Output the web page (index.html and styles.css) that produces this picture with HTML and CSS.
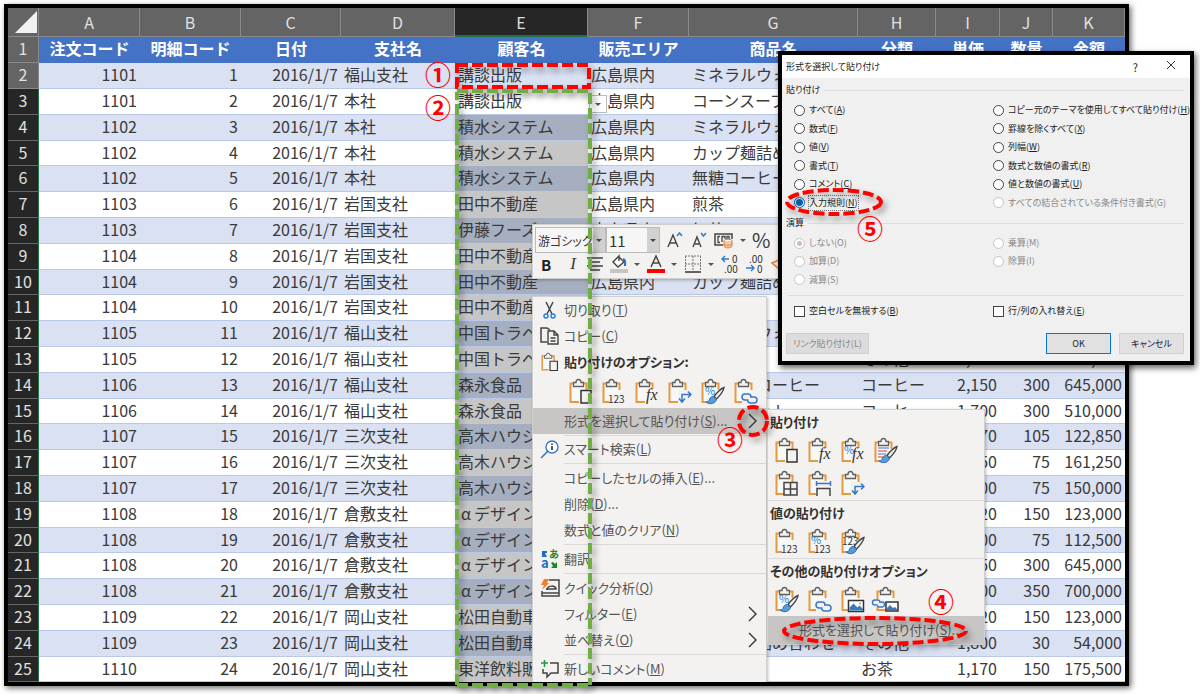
FILE: index.html
```html
<!DOCTYPE html>
<html lang="ja">
<head>
<meta charset="utf-8">
<title>形式を選択して貼り付け</title>
<link rel="stylesheet" href="styles.css">
</head>
<body>
<svg class="defs" aria-hidden="true">
  <symbol id="clip" viewBox="0 0 24 27">
    <path d="M2 6h15v18H2z" fill="#f5faf8"/>
    <path d="M5 5.500H1.500V24H10M14 5.500h3.500V12" fill="none" stroke="#e8983f" stroke-width="2"/>
    <path d="M4.500 8.500V4.500H7a2.500 3 0 0 1 5 0h2.500v4z" fill="#f3f2f1" stroke="#606060" stroke-width="1.300"/>
  </symbol>
  <symbol id="page" viewBox="0 0 24 27"><path d="M12 12.500h10v12.500H12z" fill="#f3f2f1" stroke="#333" stroke-width="1.500"/></symbol>
  <symbol id="brush" viewBox="0 0 24 27">
    <path d="M23 9.500c-3 1-8 6-10 9l2.500 2.500C18 18.500 22.500 13 23 9.500z" fill="#f3f2f1" stroke="#444" stroke-width="1.400"/>
    <path d="M12.500 18.500c-3 0-4 2-4.500 4-1 1.500-2.500 1.500-3 1.500 4 3.500 10.500 1 10.500-3z" fill="#5b9bd5" stroke="#2b6cb5"/>
  </symbol>
  <symbol id="swap" viewBox="0 0 24 27"><path d="M10 12h8v14h-8z" fill="#f3f2f1"/><path d="M14 24V16.500h9M20 13.500l3 3-3 3M11 20.500l3 3.500 3-3.500" fill="none" stroke="#3a78c3" stroke-width="1.500"/></symbol>
  <symbol id="link" viewBox="0 0 24 27"><path d="M8 14h15v12H8z" fill="#f3f2f1"/><path d="M14.500 22H11a3 3 0 0 1 0-6h3a3 3 0 0 1 3 3M16 19h4a3 3 0 0 1 0 6h-3.500a3 3 0 0 1-3-3" fill="none" stroke="#3a78c3" stroke-width="1.500"/></symbol>
  <symbol id="photo" viewBox="0 0 24 27"><path d="M7.500 14.500h15v11h-15z" fill="#fff" stroke="#333" stroke-width="1.500"/><path d="M8.500 24.500v-3l4-4 4 4 2-2 3.500 3.500v1.500z" fill="#3a78c3"/><circle cx="19" cy="17.500" r="1" fill="#e08b3a"/></symbol>
  <symbol id="paste-page" viewBox="0 0 24 27"><use href="#clip"/><use href="#page"/></symbol>
  <symbol id="paste-123" viewBox="0 0 24 27"><use href="#clip"/><path d="M7 16h17v10H7z" fill="#f3f2f1"/><text class="digits" x="6" y="25">123</text></symbol>
  <symbol id="paste-fx" viewBox="0 0 24 27"><use href="#clip"/><path d="M11 11h12v14H11z" fill="#f3f2f1"/><text class="fx" x="11" y="22">fx</text></symbol>
  <symbol id="paste-swap" viewBox="0 0 24 27"><use href="#clip"/><use href="#swap"/></symbol>
  <symbol id="paste-format" viewBox="0 0 24 27"><use href="#clip"/><text class="pct" x="4" y="17">%</text><use href="#brush"/></symbol>
  <symbol id="paste-link" viewBox="0 0 24 27"><use href="#clip"/><use href="#link"/></symbol>
</svg>

<main class="stage">
  <section class="sheet">
    <table class="grid">
      <colgroup><col class="w-head"><col class="w-a"><col class="w-b"><col class="w-c"><col class="w-d"><col class="w-e"><col class="w-f"><col class="w-g"><col class="w-h"><col class="w-i"><col class="w-j"><col class="w-k"></colgroup>
      <thead>
        <tr class="letters"><th><svg class="corner" viewBox="0 0 22 22"><path d="M22 0v22H0z"/></svg></th><th>A</th><th>B</th><th>C</th><th>D</th><th class="on">E</th><th>F</th><th>G</th><th>H</th><th>I</th><th>J</th><th>K</th></tr>
      </thead>
      <tbody>
        <tr class="titles"><th>1</th><td>注文コード</td><td>明細コード</td><td>日付</td><td>支社名</td><td>顧客名</td><td>販売エリア</td><td>商品名</td><td>分類</td><td>単価</td><td>数量</td><td>金額</td></tr>
        <tr><th>2</th><td>1101</td><td>1</td><td>2016/1/7</td><td>福山支社</td><td>講談出版</td><td>広島県内</td><td>ミネラルウォーター</td><td></td><td></td><td></td><td></td></tr>
        <tr><th>3</th><td>1101</td><td>2</td><td>2016/1/7</td><td>本社</td><td>講談出版</td><td>広島県内</td><td>コーンスープ</td><td></td><td></td><td></td><td></td></tr>
        <tr><th>4</th><td>1102</td><td>3</td><td>2016/1/7</td><td>本社</td><td>積水システム</td><td>広島県内</td><td>ミネラルウォーター</td><td></td><td></td><td></td><td></td></tr>
        <tr><th>5</th><td>1102</td><td>4</td><td>2016/1/7</td><td>本社</td><td>積水システム</td><td>広島県内</td><td>カップ麺詰め合わせ</td><td></td><td></td><td></td><td></td></tr>
        <tr><th>6</th><td>1102</td><td>5</td><td>2016/1/7</td><td>本社</td><td>積水システム</td><td>広島県内</td><td>無糖コーヒー</td><td></td><td></td><td></td><td></td></tr>
        <tr><th>7</th><td>1103</td><td>6</td><td>2016/1/7</td><td>岩国支社</td><td>田中不動産</td><td>広島県内</td><td>煎茶</td><td></td><td></td><td></td><td></td></tr>
        <tr><th>8</th><td>1103</td><td>7</td><td>2016/1/7</td><td>岩国支社</td><td>伊藤フーズ</td><td>広島県内</td><td>紅茶</td><td></td><td></td><td></td><td></td></tr>
        <tr><th>9</th><td>1104</td><td>8</td><td>2016/1/7</td><td>岩国支社</td><td>田中不動産</td><td></td><td></td><td></td><td></td><td></td><td></td></tr>
        <tr><th>10</th><td>1104</td><td>9</td><td>2016/1/7</td><td>岩国支社</td><td>田中不動産</td><td>広島県内</td><td>カップ麺詰め合わせ</td><td></td><td></td><td></td><td></td></tr>
        <tr><th>11</th><td>1104</td><td>10</td><td>2016/1/7</td><td>岩国支社</td><td>田中不動産</td><td></td><td></td><td></td><td></td><td></td><td></td></tr>
        <tr><th>12</th><td>1105</td><td>11</td><td>2016/1/7</td><td>福山支社</td><td>中国トラベル</td><td></td><td>ミネラルウォーター</td><td></td><td></td><td></td><td></td></tr>
        <tr><th>13</th><td>1105</td><td>12</td><td>2016/1/7</td><td>福山支社</td><td>中国トラベル</td><td></td><td></td><td>その他</td><td>2,000</td><td>35</td><td>70,000</td></tr>
        <tr><th>14</th><td>1106</td><td>13</td><td>2016/1/7</td><td>福山支社</td><td>森永食品</td><td></td><td>ブレンドコーヒー</td><td>コーヒー</td><td>2,150</td><td>300</td><td>645,000</td></tr>
        <tr><th>15</th><td>1106</td><td>14</td><td>2016/1/7</td><td>福山支社</td><td>森永食品</td><td></td><td>ギフトセット</td><td>コーヒー</td><td>1,700</td><td>300</td><td>510,000</td></tr>
        <tr><th>16</th><td>1107</td><td>15</td><td>2016/1/7</td><td>三次支社</td><td>高木ハウジング</td><td></td><td></td><td></td><td>1,170</td><td>105</td><td>122,850</td></tr>
        <tr><th>17</th><td>1107</td><td>16</td><td>2016/1/7</td><td>三次支社</td><td>高木ハウジング</td><td></td><td></td><td></td><td>2,150</td><td>75</td><td>161,250</td></tr>
        <tr><th>18</th><td>1107</td><td>17</td><td>2016/1/7</td><td>三次支社</td><td>高木ハウジング</td><td></td><td></td><td></td><td>2,000</td><td>75</td><td>150,000</td></tr>
        <tr><th>19</th><td>1108</td><td>18</td><td>2016/1/7</td><td>倉敷支社</td><td><span class="full">α</span>デザイン</td><td></td><td></td><td></td><td>820</td><td>150</td><td>123,000</td></tr>
        <tr><th>20</th><td>1108</td><td>19</td><td>2016/1/7</td><td>倉敷支社</td><td><span class="full">α</span>デザイン</td><td></td><td></td><td></td><td>1,500</td><td>75</td><td>112,500</td></tr>
        <tr><th>21</th><td>1108</td><td>20</td><td>2016/1/7</td><td>倉敷支社</td><td><span class="full">α</span>デザイン</td><td></td><td></td><td></td><td>2,150</td><td>300</td><td>645,000</td></tr>
        <tr><th>22</th><td>1108</td><td>21</td><td>2016/1/7</td><td>倉敷支社</td><td><span class="full">α</span>デザイン</td><td></td><td></td><td></td><td>2,000</td><td>350</td><td>700,000</td></tr>
        <tr><th>23</th><td>1109</td><td>22</td><td>2016/1/7</td><td>岡山支社</td><td>松田自動車</td><td></td><td></td><td></td><td>820</td><td>150</td><td>123,000</td></tr>
        <tr><th>24</th><td>1109</td><td>23</td><td>2016/1/7</td><td>岡山支社</td><td>松田自動車</td><td></td><td>カップ麺詰め合わせ</td><td>その他</td><td>1,800</td><td>30</td><td>54,000</td></tr>
        <tr><th>25</th><td>1110</td><td>24</td><td>2016/1/7</td><td>岡山支社</td><td>東洋飲料販売</td><td></td><td></td><td>お茶</td><td>1,170</td><td>150</td><td>175,500</td></tr>
      </tbody>
    </table>
  </section>

  <button class="cell-drop" type="button" aria-label="リスト"><i class="tri"></i></button>

  <div class="mini" role="toolbar">
    <div class="mini-row">
      <span class="pick pick-font"><select aria-label="フォント"><option>游ゴシック</option></select><i class="tri"></i></span>
      <span class="pick pick-size"><select aria-label="サイズ"><option>11</option></select><i class="tri"></i></span>
      <button type="button" aria-label="フォントを拡大"><svg width="18" height="20" viewBox="0 0 18 20"><path d="M2 17L7 5l5 12M4 13h6" fill="none" stroke="#444" stroke-width="1.400"/><path d="M11 6l2.500-3L16 6" fill="none" stroke="#2b7cd3" stroke-width="1.500"/></svg></button>
      <button type="button" aria-label="フォントを縮小"><svg width="18" height="20" viewBox="0 0 18 20"><path d="M3 17L7 7l4 10M5 14h4" fill="none" stroke="#444" stroke-width="1.400"/><path d="M11 3l2.500 3L16 3" fill="none" stroke="#2b7cd3" stroke-width="1.500"/></svg></button>
      <button type="button" aria-label="通貨"><svg width="20" height="20" viewBox="0 0 20 20"><path d="M9 15H1V4h17v5" fill="none" stroke="#444" stroke-width="1.500"/><path d="M6 6.500H4v6h2M8 12V6.500h3V9M13 9V6.500h2V9" fill="none" stroke="#444" stroke-width="1.300"/><ellipse cx="14" cy="11" rx="4" ry="1.800" fill="#fff" stroke="#e0803a"/><path d="M10 11v5c0 2.500 8 2.500 8 0v-5M10 13.500c0 2.500 8 2.500 8 0" fill="#f6c9a5" stroke="#e0803a"/></svg><i class="tri"></i></button>
      <button type="button" class="percent">%</button>
    </div>
    <div class="mini-row lower">
      <button type="button" class="bold">B</button>
      <button type="button" class="ital">I</button>
      <button type="button" aria-label="中央揃え"><svg width="16" height="18" viewBox="0 0 16 18"><path d="M0 3h16M3 7h10M0 11h16M3 15h10" stroke="#444" stroke-width="1.400"/></svg></button>
      <button type="button" aria-label="塗りつぶし"><svg width="18" height="20" viewBox="0 0 18 20"><path d="M8 2l6 6-6 5-5-5 6-6v5" fill="#fff" stroke="#444" stroke-width="1.400"/><path d="M13 5c2 0 2.500 3 2 7" fill="none" stroke="#2b6cb5" stroke-width="2"/><path d="M0 15h18v4H0z" fill="#c8c6c4"/></svg><i class="tri"></i></button>
      <button type="button" aria-label="フォントの色"><svg width="18" height="20" viewBox="0 0 18 20"><path d="M4 13L9 2l5 11M6 9h6" fill="none" stroke="#444" stroke-width="1.500"/><path d="M0 15h18v4H0z" fill="#f00"/></svg><i class="tri"></i></button>
      <button type="button" aria-label="罫線"><svg width="18" height="20" viewBox="0 0 18 20"><path d="M1 2h16M1 10h16M1.500 2v15M9 2v15M16.500 2v15" stroke="#777" stroke-dasharray="2 1" fill="none"/><path d="M1 18h16" stroke="#333" stroke-width="1.500"/></svg><i class="tri"></i></button>
      <button type="button" aria-label="小数点以下を増やす"><svg width="18" height="20" viewBox="0 0 18 20"><path d="M8 5H1M4 2L1 5l3 3" fill="none" stroke="#2b7cd3" stroke-width="1.400"/><text class="dec" x="11" y="9">0</text><text class="dec" x="3" y="19">.00</text></svg></button>
      <button type="button" aria-label="小数点以下を減らす"><svg width="18" height="20" viewBox="0 0 18 20"><path d="M0 14h8M5 11l3 3-3 3" fill="none" stroke="#2b7cd3" stroke-width="1.400"/><text class="dec" x="3" y="9">.00</text><text class="dec" x="11" y="19">0</text></svg></button>
      <button type="button" aria-label="書式のコピー"><svg width="8" height="20" viewBox="0 0 8 20"><path d="M8 6L1 9l7 6" fill="#fbe3d0" stroke="#e0803a" stroke-width="1.500"/></svg></button>
    </div>
  </div>

  <div class="menu context" role="menu">
    <button type="button" class="item"><svg class="ico" viewBox="0 0 20 20"><path d="M6 2l6 12M13 2L7 14" fill="none" stroke="#444" stroke-width="1.500"/><circle cx="6" cy="16" r="2" fill="none" stroke="#2b7cd3" stroke-width="1.400"/><circle cx="13" cy="16" r="2" fill="none" stroke="#2b7cd3" stroke-width="1.400"/></svg><span>切り取り(<u>T</u>)</span></button>
    <button type="button" class="item"><svg class="ico" viewBox="0 0 20 20"><path d="M7 16H1V2h6l3 2" fill="none" stroke="#444" stroke-width="1.500"/><path d="M8 5h6l4 4v9H8zM14 5v4h4M10.500 12h5M10.500 15h5" fill="#f3f2f1" stroke="#444" stroke-width="1.400"/></svg><span>コピー(<u>C</u>)</span></button>
    <div class="item head"><svg class="ico" viewBox="0 0 24 27"><use href="#paste-page"/></svg><span>貼り付けのオプション:</span></div>
    <div class="icons inset">
      <button type="button" aria-label="貼り付け"><svg><use href="#paste-page"/></svg></button>
      <button type="button" aria-label="値"><svg><use href="#paste-123"/></svg></button>
      <button type="button" aria-label="数式"><svg><use href="#paste-fx"/></svg></button>
      <button type="button" aria-label="行/列の入れ替え"><svg><use href="#paste-swap"/></svg></button>
      <button type="button" aria-label="書式設定"><svg><use href="#paste-format"/></svg></button>
      <button type="button" aria-label="リンク貼り付け"><svg><use href="#paste-link"/></svg></button>
    </div>
    <button type="button" class="item hover"><i class="ico"></i><span>形式を選択して貼り付け(<u>S</u>)...</span><svg class="chev" viewBox="0 0 10 16"><path d="M1 1l7 7-7 7"/></svg></button>
    <hr>
    <button type="button" class="item"><svg class="ico" viewBox="0 0 20 20"><circle cx="12" cy="8" r="6" fill="#fff" stroke="#3a78c3" stroke-width="1.400"/><path d="M8 12l-7 7" stroke="#3a78c3" stroke-width="1.600"/><path d="M12 7v4M12 4.500v1.500" stroke="#222" stroke-width="1.500"/></svg><span>スマート検索(<u>L</u>)</span></button>
    <hr>
    <button type="button" class="item"><i class="ico"></i><span>コピーしたセルの挿入(<u>E</u>)...</span></button>
    <button type="button" class="item"><i class="ico"></i><span>削除(<u>D</u>)...</span></button>
    <button type="button" class="item"><i class="ico"></i><span>数式と値のクリア(<u>N</u>)</span></button>
    <hr>
    <button type="button" class="item"><svg class="ico" viewBox="0 0 20 20"><text class="tr-a" x="1" y="19">a</text><text class="tr-b" x="9" y="9">あ</text><path d="M2 2h5v2H5l2 4H2z" fill="#1a6fc4"/><path d="M17 19h-6l2-2-2-3 2-1 2 2 2-2z" fill="#138a2c"/></svg><span>翻訳</span></button>
    <hr>
    <button type="button" class="item"><svg class="ico" viewBox="0 0 20 20"><path d="M9 2h10v16H2v-5M2 15h17M7 12c0-5 9-5 9-1H6" fill="none" stroke="#444" stroke-width="1.500"/><path d="M4 1h5L7 5h2l-7 7 2-5H1z" fill="#f0802a"/></svg><span>クイック分析(<u>Q</u>)</span></button>
    <button type="button" class="item"><i class="ico"></i><span>フィルター(<u>E</u>)</span><svg class="chev" viewBox="0 0 10 16"><path d="M1 1l7 7-7 7"/></svg></button>
    <button type="button" class="item"><i class="ico"></i><span>並べ替え(<u>O</u>)</span><svg class="chev" viewBox="0 0 10 16"><path d="M1 1l7 7-7 7"/></svg></button>
    <hr>
    <button type="button" class="item last"><svg class="ico" viewBox="0 0 20 20"><path d="M10 4h8v10h-7l-4 4v-4H3v-4" fill="none" stroke="#444" stroke-width="1.500"/><path d="M1 4h7M4.500 1v7" stroke="#1e9a4a" stroke-width="1.500"/></svg><span>新しいコメント(<u>M</u>)</span></button>
  </div>

  <div class="menu sub" role="menu">
    <h3>貼り付け</h3>
    <div class="icons">
      <button type="button" aria-label="貼り付け"><svg><use href="#paste-page"/></svg></button>
      <button type="button" aria-label="数式"><svg><use href="#paste-fx"/></svg></button>
      <button type="button" aria-label="数式と数値の書式"><svg><use href="#paste-fx"/><text class="pct" x="3" y="17">%</text></svg></button>
      <button type="button" aria-label="元の書式を保持"><svg viewBox="0 0 24 27"><use href="#clip"/><path d="M4 11h11M4 17h8" stroke="#3a78c3"/><path d="M4 14h9M4 20h5" stroke="#e33"/><use href="#brush"/></svg></button>
    </div>
    <div class="icons">
      <button type="button" aria-label="罫線なし"><svg viewBox="0 0 24 27"><use href="#clip"/><path d="M9 12.500h13V25H9zM15.500 12.500V25M9 19h13" fill="#f3f2f1" stroke="#444" stroke-width="1.500"/></svg></button>
      <button type="button" aria-label="元の列幅を保持"><svg viewBox="0 0 24 27"><use href="#clip"/><path d="M8 11h15v15H8z" fill="#f3f2f1"/><path d="M8.500 11v5M22.500 11v5M9 13.500h13" stroke="#3a78c3" stroke-width="1.500"/><path d="M9 26v-7.500h13V26" fill="none" stroke="#444" stroke-width="1.500"/></svg></button>
      <button type="button" aria-label="行/列の入れ替え"><svg><use href="#paste-swap"/></svg></button>
    </div>
    <h3 class="ruled">値の貼り付け</h3>
    <div class="icons">
      <button type="button" aria-label="値"><svg><use href="#paste-123"/></svg></button>
      <button type="button" aria-label="値と数値の書式"><svg><use href="#paste-123"/><text class="pct" x="3" y="16">%</text></svg></button>
      <button type="button" aria-label="値と元の書式"><svg viewBox="0 0 24 27"><use href="#clip"/><text class="digits" x="1" y="17">123</text><use href="#brush"/></svg></button>
    </div>
    <h3 class="ruled">その他の貼り付けオプション</h3>
    <div class="icons">
      <button type="button" aria-label="書式設定"><svg><use href="#paste-format"/></svg></button>
      <button type="button" aria-label="リンク貼り付け"><svg><use href="#paste-link"/></svg></button>
      <button type="button" aria-label="図"><svg viewBox="0 0 24 27"><use href="#clip"/><use href="#photo"/></svg></button>
      <button type="button" aria-label="リンクされた図"><svg class="wide" viewBox="-5 0 29 27"><use href="#clip" width="24" height="27"/><path d="M-5 13H8v8H-5z" fill="#f3f2f1"/><path d="M0 19h-1a2.500 2.500 0 0 1 0-5h3a2.500 2.500 0 0 1 2 3M3 16h3a2.500 2.500 0 0 1 0 5H3a2.500 2.500 0 0 1-2-3" fill="none" stroke="#3a78c3" stroke-width="1.400"/><path d="M10 16h12v9H10z" fill="#fff" stroke="#333" stroke-width="1.500"/><path d="M11 24v-2l3-3 3 3 2-1 2 2v1z" fill="#3a78c3"/></svg></button>
    </div>
    <button type="button" class="item hover"><i class="ico"></i><span>形式を選択して貼り付け(<u>S</u>)...</span></button>
  </div>

  <form class="dialog" role="dialog" aria-label="形式を選択して貼り付け">
    <header><h2>形式を選択して貼り付け</h2><button type="button" class="help">?</button><button type="button" aria-label="閉じる"><svg width="10" height="10" viewBox="0 0 10 10"><path d="M1 1l8 8M9 1L1 9" stroke="#333"/></svg></button></header>
    <div class="body">
      <fieldset>
        <legend>貼り付け</legend>
        <div class="opts six">
          <label><input type="radio" name="p"><span>すべて(<u>A</u>)</span></label>
          <label><input type="radio" name="p"><span>コピー元のテーマを使用してすべて貼り付け(<u>H</u>)</span></label>
          <label><input type="radio" name="p"><span>数式(<u>F</u>)</span></label>
          <label><input type="radio" name="p"><span>罫線を除くすべて(<u>X</u>)</span></label>
          <label><input type="radio" name="p"><span>値(<u>V</u>)</span></label>
          <label><input type="radio" name="p"><span>列幅(<u>W</u>)</span></label>
          <label><input type="radio" name="p"><span>書式(<u>T</u>)</span></label>
          <label><input type="radio" name="p"><span>数式と数値の書式(<u>R</u>)</span></label>
          <label><input type="radio" name="p"><span>コメント(<u>C</u>)</span></label>
          <label><input type="radio" name="p"><span>値と数値の書式(<u>U</u>)</span></label>
          <label><input type="radio" name="p" checked><span class="focus">入力規則(<u>N</u>)</span></label>
          <label class="off"><input type="radio" name="p" disabled><span>すべての結合されている条件付き書式(G)</span></label>
        </div>
      </fieldset>
      <fieldset>
        <legend>演算</legend>
        <div class="opts three">
          <label class="off"><input type="radio" name="o" checked disabled><span>しない(O)</span></label>
          <label class="off"><input type="radio" name="o" disabled><span>乗算(M)</span></label>
          <label class="off"><input type="radio" name="o" disabled><span>加算(D)</span></label>
          <label class="off"><input type="radio" name="o" disabled><span>除算(I)</span></label>
          <label class="off"><input type="radio" name="o" disabled><span>減算(S)</span></label>
        </div>
      </fieldset>
      <div class="opts checks">
        <label><input type="checkbox"><span>空白セルを無視する(<u>B</u>)</span></label>
        <label><input type="checkbox"><span>行/列の入れ替え(<u>E</u>)</span></label>
      </div>
      <footer><button type="button" class="btn paste" disabled>リンク貼り付け(L)</button><button type="button" class="btn ok">OK</button><button type="button" class="btn">キャンセル</button></footer>
    </div>
  </form>

  <svg class="marks" viewBox="0 0 1200 694" aria-hidden="true">
    <g fill="none">
      <path class="green" d="M457 685V92M457 91H590V685M457 685H590"/>
      <rect class="red" x="457" y="65" width="132" height="22"/>
      <circle class="red" cx="753" cy="421" r="14"/>
      <ellipse class="red" cx="875" cy="631" rx="91" ry="13"/>
      <ellipse class="red" cx="834" cy="202" rx="47" ry="12"/>
    </g>
    <g class="nums">
      <text x="438" y="85">①</text>
      <text x="438" y="118">②</text>
      <text x="730" y="450">③</text>
      <text x="941" y="612">④</text>
      <text x="870" y="239">⑤</text>
    </g>
  </svg>
</main>
</body>
</html>
```
FILE: styles.css
```css
* { box-sizing: border-box; }
body { margin: 0; background: #fff; font-family: "Noto Sans CJK JP", sans-serif; color: #3a3a3a; }
button { font: inherit; color: inherit; border: 0; background: none; padding: 0; }
.defs { position: absolute; width: 0; height: 0; }
.stage { position: relative; min-height: 694px; padding: 4px 71px 8px 4px; overflow: hidden; }

.sheet { border: 4px solid #000; background: #fff; box-shadow: 2px 2px 6px rgba(0, 0, 0, .6); }
.grid { width: 100%; table-layout: fixed; border-collapse: separate; border-spacing: 0; font-size: 16px; line-height: 20px; }
.w-head { width: 31px; }
.w-a, .w-b, .w-f { width: 101px; }
.w-c { width: 100px; }
.w-d { width: 114px; }
.w-e { width: 133px; }
.w-g { width: 169px; }
.w-h { width: 78px; }
.w-i { width: 64px; }
.w-j { width: 53px; }
.w-k { width: 72px; }
.grid tr { height: 26px; }
.grid tbody tr:nth-child(5n) { height: 25px; }
.grid th, .grid td { padding: 0 3px 3px; white-space: nowrap; overflow: hidden; }
.grid td { border-bottom: 1px solid #b9c9ea; text-align: right; }
.grid td:nth-child(5), .grid td:nth-child(6), .grid td:nth-child(7), .grid td:nth-child(8), .grid td:nth-child(9) { text-align: left; }
.grid tbody tr:nth-child(even) td { background: #d9e1f2; }
.grid th { background: #262626; color: #e0e0e0; font-weight: 400; border-bottom: 1px solid #666; border-right: 1px solid #217346; }
.grid tbody tr:nth-child(-n+2) th { background: #646464; border-color: #8a8a8a; }
.grid tbody tr:nth-child(n+4) td:nth-child(6) { background: #c6c6c6; }
.grid tbody tr:nth-child(2n+4) td:nth-child(6) { background: #a6afbf; }
.grid .letters { height: 29px; }
.grid .letters th { background: #646464; border-color: #8a8a8a; padding-bottom: 0; }
.grid .letters .on { background: #262626; border-bottom: 2px solid #217346; }
.grid .titles td, .grid .titles td:nth-child(n) { background: #4472c4; color: #fff; font-weight: 700; text-align: center; border-color: #4472c4; }
.corner { display: block; width: 22px; height: 22px; margin-left: auto; fill: #f2f2f2; }
.letters th:first-child { padding: 0 1px; }
.full { display: inline-block; width: 16px; text-align: center; }

.tri { display: inline-block; border: 3px solid transparent; border-top-color: #555; border-bottom: 0; }
.cell-drop { position: absolute; left: 589px; top: 95px; width: 18px; height: 18px; background: #fff; border: 1px solid #bbb; display: flex; align-items: center; justify-content: center; }

.mini { position: absolute; left: 532px; top: 224px; width: 250px; height: 55px; padding: 3px 2px 2px; background: #f3f2f1; border: 1px solid #d0d0d0; box-shadow: 1px 1px 3px rgba(0, 0, 0, .3); overflow: hidden; }
.mini-row { display: flex; align-items: center; gap: 6px; height: 24px; white-space: nowrap; }
.mini-row button { display: flex; align-items: center; gap: 6px; flex: none; }
.pick { position: relative; display: flex; height: 26px; border: 1px solid #bbb; background: #fff; flex: none; }
.pick-font { width: 71px; }
.pick-size { width: 54px; margin-left: -6px; }
.pick select { width: 100%; appearance: none; border: 0; border-radius: 0; padding: 0 0 0 2px; font: 12px "Noto Sans CJK JP", sans-serif; font-feature-settings: "palt"; color: #333; background: #f6f6f6; }
.pick-size select { font-size: 15px; }
.pick .tri { position: absolute; right: 3px; top: 11px; }
.pick::after { content: ""; position: absolute; right: 0; top: 0; bottom: 0; width: 12px; background: rgba(0, 0, 0, .15); }
.percent { font-size: 20px; line-height: 24px; }
.lower { gap: 7px; padding-left: 6px; }
.bold { font-weight: 700; font-size: 15px; color: #222; width: 18px; }
.mini-row .ital { font: italic 17px "Liberation Serif", serif; width: 14px; justify-content: center; }
.dec { font: 10px "Noto Sans CJK JP", sans-serif; fill: #333; }

.menu { position: absolute; background: #f3f2f1; border: 1px solid #d2d0ce; font-size: 13px; line-height: 16px; font-feature-settings: "palt"; color: #555; box-shadow: 1px 1px 3px rgba(0, 0, 0, .25); }
.context { left: 532px; top: 296px; width: 235px; border-bottom: 0; }
.item { display: flex; align-items: center; width: 100%; height: 26px; padding: 0 8px 0 7px; text-align: left; white-space: nowrap; }
.item span { flex: 1; }
.item .ico { width: 20px; height: 20px; margin-right: 4px; flex: none; }
.head { font-weight: 700; color: #333; }
.hover { background: #c8c6c4; }
.chev { width: 10px; height: 16px; fill: none; stroke: #333; stroke-width: 1.4; }
.menu hr { height: 1px; margin: 1px 0 1px 31px; border: 0; background: #dcdad8; }
.hover + hr { margin-bottom: 0; }
.icons { display: flex; height: 33px; padding-left: 2px; }
.inset { padding-left: 31px; }
.icons button { display: flex; width: 33px; align-items: center; justify-content: center; }
.icons svg { width: 24px; height: 27px; overflow: visible; }
.icons .wide { width: 29px; }
.sub { left: 767px; top: 409px; width: 218px; }
.sub h3 { margin: 0; padding-left: 2px; font-size: 13px; line-height: 24px; color: #333; }
.sub .ruled { border-top: 1px solid #dcdad8; }
.sub .item { height: 28px; padding-right: 0; }
.digits { font: 10px "Noto Sans CJK JP", sans-serif; fill: #333; }
.fx { font: italic 16px "Liberation Serif", serif; fill: #333; }
.pct { font: 11px "Noto Sans CJK JP", sans-serif; fill: #2b7cd3; }
.tr-a { font: 700 13px "Noto Sans CJK JP", sans-serif; fill: #1a6fc4; }
.tr-b { font: 700 10px "Noto Sans CJK JP", sans-serif; fill: #138a2c; }

.dialog { position: absolute; left: 778px; top: 51px; width: 416px; border: 4px solid #000; background: #f0f0f0; font-size: 9px; line-height: 14px; font-feature-settings: "palt"; color: #222; box-shadow: 2px 3px 6px rgba(0, 0, 0, .6); }
.dialog header { display: flex; align-items: center; height: 23px; padding: 0 14px 0 4px; background: #fff; gap: 28px; }
.dialog h2 { flex: 1; margin: 0; font-size: 9px; font-weight: 400; }
.help { font-size: 11px; }
.body { padding: 5px 6px 7px 4px; }
fieldset { margin: 0; padding: 0; border: 0; min-width: 0; }
fieldset + fieldset { margin-top: 4px; }
legend { display: flex; align-items: center; gap: 4px; width: 100%; padding: 0; height: 14px; }
legend::after { content: ""; flex: 1; height: 1px; background: #ddd; }
.opts { display: grid; grid-template-columns: 199px 1fr; grid-auto-rows: 1fr; padding: 4px 0 0 8px; }
.six { height: 115px; }
.three { height: 59px; }
.opts label { display: flex; align-items: center; gap: 4px; white-space: nowrap; }
.opts input { appearance: none; width: 11px; height: 11px; margin: 0; border: 1px solid #444; background: #fff; flex: none; }
.opts [type=radio] { border-radius: 50%; }
.opts input:checked { border-color: #0067c0; background: radial-gradient(circle, #0067c0 3px, #fff 4px); }
.opts input:disabled { border-color: #c4c4c4; }
.opts input:checked:disabled { background: radial-gradient(circle, #c0c0c0 2px, #fff 3px); }
.off { color: #888; }
.focus { outline: 1px dotted #777; }
.opts.checks { grid-auto-rows: 18px; margin: 6px 0 0 2px; padding: 6px 0 0 6px; border-top: 1px solid #ddd; }
.dialog footer { display: flex; gap: 8px; margin-top: 13px; }
.btn { width: 65px; height: 21px; background: #e1e1e1; border: 1px solid #d0d0d0; }
.paste { width: 83px; margin-right: auto; color: #888; background: #dcdcdc; }
.ok { border: 1px solid #0078d7; }

.marks { position: absolute; left: 0; top: 0; width: 1200px; height: 694px; pointer-events: none; }
.marks g { filter: drop-shadow(3px 4px 3px rgba(0, 0, 0, .4)); }
.marks .nums { filter: none; }
.green { stroke: #70ad47; stroke-width: 4; stroke-dasharray: 11 4; }
.red { stroke: #f00; stroke-width: 4; stroke-dasharray: 11 4; }
.nums text { font: 700 26px "Noto Sans CJK JP", sans-serif; fill: #f00; text-anchor: middle; }
```
